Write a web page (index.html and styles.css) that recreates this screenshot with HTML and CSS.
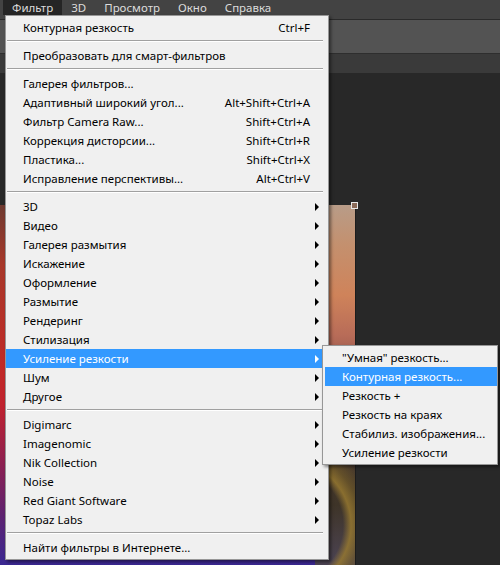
FILE: index.html
```html
<!DOCTYPE html>
<html lang="ru">
<head>
    <meta charset="UTF-8">
    <meta name="viewport" content="width=device-width, initial-scale=1.0">
    <link rel="stylesheet" href="styles.css">
</head>
<body>
    <div class="app">
        <div class="menubar">
            <span class="menubar-item active">Фильтр</span>
            <span class="menubar-item">3D</span>
            <span class="menubar-item">Просмотр</span>
            <span class="menubar-item">Окно</span>
            <span class="menubar-item">Справка</span>
        </div>
        <div class="options-bar"></div>
        <div class="tab-strip"></div>
        <div class="workspace"></div>
    </div>

    <!-- open document behind the menus -->
    <div class="document">
        <div class="doc-left"></div>
        <div class="doc-right"></div>
        <span class="doc-handle"></span>
    </div>

    <ul class="menu main-menu">
        <li class="menu-item"><span class="label">Контурная резкость</span><span class="shortcut">Ctrl+F</span><span class="arrow-cell"></span></li>
        <li class="menu-sep"></li>
        <li class="menu-item"><span class="label">Преобразовать для смарт-фильтров</span></li>
        <li class="menu-sep"></li>
        <li class="menu-item"><span class="label">Галерея фильтров...</span></li>
        <li class="menu-item"><span class="label">Адаптивный широкий угол...</span><span class="shortcut">Alt+Shift+Ctrl+A</span><span class="arrow-cell"></span></li>
        <li class="menu-item"><span class="label">Фильтр Camera Raw...</span><span class="shortcut">Shift+Ctrl+A</span><span class="arrow-cell"></span></li>
        <li class="menu-item"><span class="label">Коррекция дисторсии...</span><span class="shortcut">Shift+Ctrl+R</span><span class="arrow-cell"></span></li>
        <li class="menu-item"><span class="label">Пластика...</span><span class="shortcut">Shift+Ctrl+X</span><span class="arrow-cell"></span></li>
        <li class="menu-item"><span class="label">Исправление перспективы...</span><span class="shortcut">Alt+Ctrl+V</span><span class="arrow-cell"></span></li>
        <li class="menu-sep"></li>
        <li class="menu-item"><span class="label">3D</span><span class="arrow-cell"><i class="arrow"></i></span></li>
        <li class="menu-item"><span class="label">Видео</span><span class="arrow-cell"><i class="arrow"></i></span></li>
        <li class="menu-item"><span class="label">Галерея размытия</span><span class="arrow-cell"><i class="arrow"></i></span></li>
        <li class="menu-item"><span class="label">Искажение</span><span class="arrow-cell"><i class="arrow"></i></span></li>
        <li class="menu-item"><span class="label">Оформление</span><span class="arrow-cell"><i class="arrow"></i></span></li>
        <li class="menu-item"><span class="label">Размытие</span><span class="arrow-cell"><i class="arrow"></i></span></li>
        <li class="menu-item"><span class="label">Рендеринг</span><span class="arrow-cell"><i class="arrow"></i></span></li>
        <li class="menu-item"><span class="label">Стилизация</span><span class="arrow-cell"><i class="arrow"></i></span></li>
        <li class="menu-item selected"><span class="label">Усиление резкости</span><span class="arrow-cell"><i class="arrow"></i></span></li>
        <li class="menu-item"><span class="label">Шум</span><span class="arrow-cell"><i class="arrow"></i></span></li>
        <li class="menu-item"><span class="label">Другое</span><span class="arrow-cell"><i class="arrow"></i></span></li>
        <li class="menu-sep"></li>
        <li class="menu-item"><span class="label">Digimarc</span><span class="arrow-cell"><i class="arrow"></i></span></li>
        <li class="menu-item"><span class="label">Imagenomic</span><span class="arrow-cell"><i class="arrow"></i></span></li>
        <li class="menu-item"><span class="label">Nik Collection</span><span class="arrow-cell"><i class="arrow"></i></span></li>
        <li class="menu-item"><span class="label">Noise</span><span class="arrow-cell"><i class="arrow"></i></span></li>
        <li class="menu-item"><span class="label">Red Giant Software</span><span class="arrow-cell"><i class="arrow"></i></span></li>
        <li class="menu-item"><span class="label">Topaz Labs</span><span class="arrow-cell"><i class="arrow"></i></span></li>
        <li class="menu-sep"></li>
        <li class="menu-item"><span class="label">Найти фильтры в Интернете...</span></li>
    </ul>

    <ul class="menu sub-menu">
        <li class="menu-item"><span class="label">"Умная" резкость...</span></li>
        <li class="menu-item selected"><span class="label">Контурная резкость...</span></li>
        <li class="menu-item"><span class="label">Резкость +</span></li>
        <li class="menu-item"><span class="label">Резкость на краях</span></li>
        <li class="menu-item"><span class="label">Стабилиз. изображения...</span></li>
        <li class="menu-item"><span class="label">Усиление резкости</span></li>
    </ul>
</body>
</html>
```

FILE: styles.css
```css
body, html {
    margin: 0;
    padding: 0;
    width: 500px;
    height: 565px;
    overflow: hidden;
    background: #282828;
    font-family: 'Noto Sans', 'Open Sans', sans-serif;
}

body {
    position: relative;
}

.app {
    display: flex;
    flex-direction: column;
    height: 100%;
}

/* application menu bar */
.menubar {
    display: flex;
    height: 20px;
    padding-left: 3px;
    background: #434343;
    border-bottom: 1px solid #2a2a2a;
    box-sizing: border-box;
}

.menubar-item {
    padding: 0 9px;
    height: 15px;
    line-height: 15px;
    font-size: 11.5px;
    color: #dcdcdc;
}

.menubar-item.active {
    background: #252525;
}

.options-bar {
    height: 33px;
    background: #535353;
    border-bottom: 1px solid #2e2e2e;
}

.tab-strip {
    height: 19px;
    background: #3a3a3a;
}

.workspace {
    flex: 1;
    background: #282828;
}

/* document window */
.document {
    position: absolute;
    left: -60px;
    top: 205px;
    width: 415px;
    height: 360px;
    display: flex;
    box-shadow: 1px 0 0 #1c1c1c;
}

.doc-left {
    flex: 1;
    background: linear-gradient(to bottom, #6e3a30 0, #a8382a 60px, #c02a26 160px, #c0222e 200px, #8c2052 260px, #5e2270 310px, #3a2892 360px);
}

.doc-right {
    width: 40px;
    background:
        radial-gradient(circle at -30px 320px, transparent 58px, rgba(150, 120, 48, 0.85) 66px, rgba(120, 96, 40, 0.6) 76px, transparent 90px),
        linear-gradient(to bottom, #b89c88 0, #c4906e 40px, #cf835a 90px, #b86c58 130px, #8a5048 170px, #4a3a2e 250px, #3e3428 300px, #4c4454 360px);
}

.doc-handle {
    position: absolute;
    right: -3px;
    top: -3px;
    width: 5px;
    height: 5px;
    border: 1px solid #e8e8e8;
    background: #8a6a58;
}

/* popup menus */
.menu {
    position: absolute;
    margin: 0;
    list-style: none;
    background: #f0f0f0;
    border: 1px solid #979797;
    box-sizing: border-box;
    box-shadow: 2px 2px 3px rgba(0, 0, 0, 0.45);
    font-size: 11.5px;
    color: #000;
}

.main-menu {
    left: 5px;
    top: 15px;
    width: 324px;
    padding: 2px 5px 2px 0;
}

.sub-menu {
    left: 322px;
    top: 345px;
    width: 176px;
    padding: 2px 0 2px 2px;
}

.menu-item {
    display: flex;
    align-items: center;
    height: 19px;
    padding-left: 17px;
    white-space: nowrap;
}

.menu-item .label {
    flex: 1;
}

.menu-item .shortcut {
    text-align: right;
}

.arrow-cell {
    width: 13px;
    display: flex;
    align-items: center;
}

.arrow {
    display: block;
    margin-left: 5px;
    width: 0;
    height: 0;
    border-top: 4px solid transparent;
    border-bottom: 4px solid transparent;
    border-left: 4px solid #000;
}

.menu-item.selected {
    background: #3399ff;
    color: #fff;
}

.menu-item.selected .arrow {
    border-left-color: #fff;
}

/* grey rule with a white highlight under it */
.menu-sep {
    height: 0;
    margin: 3px 0 4px 1px;
    border-top: 1px solid #a0a0a0;
    border-bottom: 1px solid #fff;
}
```
